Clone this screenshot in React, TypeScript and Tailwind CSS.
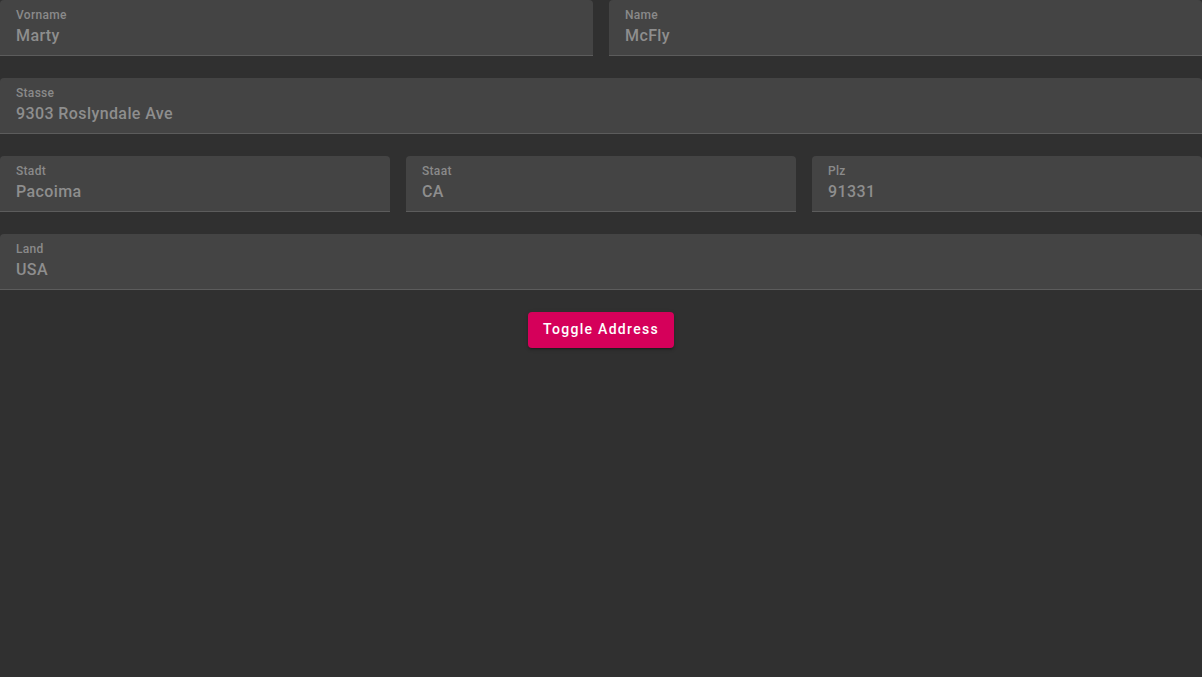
import React from "react";

interface FieldProps {
  label: string;
  value: string;
}

const Field: React.FC<FieldProps> = ({ label, value }) => (
  <div className="flex-1 h-14 rounded-t-[4px] bg-[#444444] border-b border-[#5c5c5c] px-4 pt-2">
    <div className="text-[12px] leading-[14px] font-medium tracking-[0.3px] text-[#8a8a8a]">
      {label}
    </div>
    <div className="mt-[4px] text-[16px] leading-[19px] font-medium tracking-[0.4px] text-[#8e8e8e]">
      {value}
    </div>
  </div>
);

export default function App() {
  return (
    <div
      className="min-h-[677px] w-full bg-[#303030]"
      style={{ fontFamily: "Roboto, 'Liberation Sans', sans-serif" }}
    >
      <div className="flex flex-col gap-[22px]">
        {/* Name row */}
        <div className="flex gap-4">
          <Field label="Vorname" value="Marty" />
          <Field label="Name" value="McFly" />
        </div>

        {/* Street */}
        <div className="flex">
          <Field label="Stasse" value="9303 Roslyndale Ave" />
        </div>

        {/* City / state / zip */}
        <div className="flex gap-4">
          <Field label="Stadt" value="Pacoima" />
          <Field label="Staat" value="CA" />
          <Field label="Plz" value="91331" />
        </div>

        {/* Country */}
        <div className="flex">
          <Field label="Land" value="USA" />
        </div>

        <div className="flex justify-center">
          <button
            type="button"
            className="h-9 w-[146px] rounded-[4px] bg-[#d5005a] pb-[2px] text-[14px] font-medium tracking-[1.3px] text-white shadow-[0_3px_1px_-2px_rgba(0,0,0,0.2),0_2px_2px_0_rgba(0,0,0,0.14),0_1px_5px_0_rgba(0,0,0,0.12)]"
          >
            Toggle Address
          </button>
        </div>
      </div>
    </div>
  );
}
